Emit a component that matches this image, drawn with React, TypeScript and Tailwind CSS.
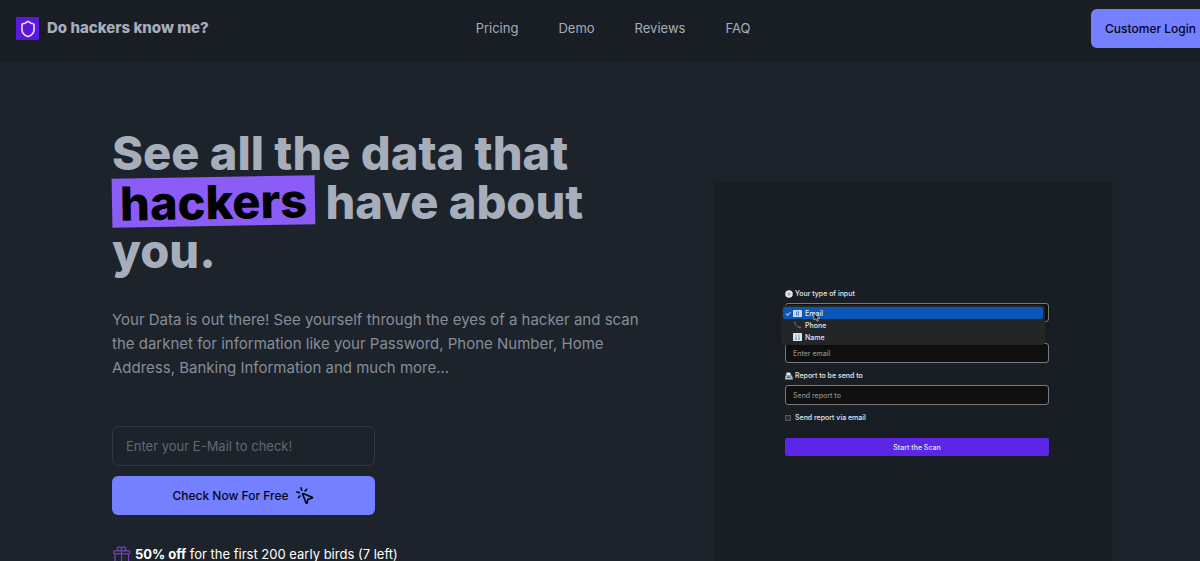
import { useState } from 'react';
import { MousePointerClick, Shield } from 'lucide-react';
import { HiOutlineGift } from 'react-icons/hi2';

const NAV_LINKS = ['Pricing', 'Demo', 'Reviews', 'FAQ'];

function GlobeIcon() {
  return (
    <svg viewBox="0 0 16 16" className="w-2 h-2">
      <circle cx="8" cy="8" r="7.5" fill="#e5e7eb" />
      <path d="M8 4v8M4 8h8" stroke="#8b9199" strokeWidth="1.5" fill="none" />
    </svg>
  );
}

function InboxIcon() {
  return (
    <svg viewBox="0 0 16 16" className="w-2 h-2">
      <path d="M3 1h7l3 6H2z" fill="#e5e7eb" />
      <path d="M1 7h13l2 8H0z" fill="#b6c2d1" />
      <path d="M4 9h7v3H4z" fill="#3f5f86" />
    </svg>
  );
}

function EmailIcon() {
  return (
    <svg viewBox="0 0 18 14" className="w-[9px] h-[7px]">
      <rect width="18" height="14" rx="1" fill="#c7d9f2" />
      <rect x="6" y="3" width="6" height="8" fill="#5d83bd" />
      <path d="M8 5h2v4H8z" fill="#e5e7eb" />
    </svg>
  );
}

function PhoneIcon() {
  return (
    <svg viewBox="0 0 18 16" className="w-[9px] h-2">
      <path d="M2 1c-2 4 6 13 13 14l2-3-4-2-2 1C8 10 6 7 5 5l1-2-2-2z" fill="#606367" />
    </svg>
  );
}

function NameIcon() {
  return (
    <svg viewBox="0 0 18 16" className="w-[9px] h-2">
      <rect width="18" height="16" rx="1" fill="#dbe7f0" />
      <path d="M5 3h2v4l1 7H4l1-7zM11 3h2v4l1 7h-4l1-7z" fill="#8fa9bd" />
    </svg>
  );
}

const OPTIONS = [
  { label: 'Email', icon: EmailIcon },
  { label: 'Phone', icon: PhoneIcon },
  { label: 'Name', icon: NameIcon },
];

function Header() {
  return (
    <header className="bg-[#191e24]">
      <div className="flex items-center h-[61px] pb-1 pl-4 -mr-2.5">
        <a href="#" className="flex items-center gap-2 flex-1 whitespace-nowrap font-extrabold text-[15px]">
          <span className="flex items-center justify-center w-[23px] h-[23px] bg-[#5b16e0] text-[#e9defc]">
            <Shield className="w-[18px] h-[18px]" strokeWidth={2.2} />
          </span>
          Do hackers know me?
        </a>
        <nav className="flex gap-10 text-[13px]">
          {NAV_LINKS.map((link) => (
            <a key={link} href="#" className="hover:text-white">
              {link}
            </a>
          ))}
        </nav>
        <div className="flex flex-1 justify-end">
          <button
            type="button"
            className="h-[39px] px-3.5 rounded-md bg-[#7480ff] text-[#050617] text-xs font-medium whitespace-nowrap"
          >
            Customer Login
          </button>
        </div>
      </div>
    </header>
  );
}

function ScanDemo() {
  const [selected, setSelected] = useState('Email');

  return (
    <div className="w-[399px] shrink-0 h-[400px] pl-[72px] pr-[63px] pt-[107px] bg-[#191e24] text-[7px] leading-[11px] text-gray-200 font-medium">
      <label htmlFor="type" className="flex items-center gap-0.5">
        <GlobeIcon />
        Your type of input
      </label>
      <div className="relative mt-1">
        <select
          id="type"
          value={selected}
          onChange={(e) => setSelected(e.target.value)}
          className="block w-full h-[19px] px-[7px] rounded-[3px] border border-[#77797c] bg-[#101010]"
        >
          {OPTIONS.map((o) => (
            <option key={o.label}>{o.label}</option>
          ))}
        </select>
        {/* Open option list */}
        <div className="absolute z-10 top-0.5 -left-1 right-1 p-0.5 rounded bg-[#242527] shadow-md">
          {OPTIONS.map(({ label, icon: Icon }) => (
            <button
              key={label}
              type="button"
              onClick={() => setSelected(label)}
              className={`flex items-center w-full h-3 rounded-xs ${label === selected ? 'bg-[#0b57b5]' : ''}`}
            >
              <span className="w-2.5">{label === selected && '✓'}</span>
              <Icon />
              <span className="ml-[3px]">{label}</span>
            </button>
          ))}
          <svg viewBox="0 0 10 14" className="absolute top-2 left-8 w-[7px] h-[9px]">
            <path d="M1 0v11l3-2 2 4 2-1-2-4h4z" fill="#111" stroke="#ddd" strokeWidth="1" />
          </svg>
        </div>
      </div>
      <input
        type="email"
        aria-label="Enter email"
        placeholder="Enter email"
        className="block w-full h-5 mt-[21px] px-[7px] rounded-[3px] border border-[#77797c] bg-[#101010] placeholder:text-[#8c8c8c]"
      />
      <label htmlFor="report" className="flex items-center gap-0.5 mt-[7px]">
        <InboxIcon />
        Report to be send to
      </label>
      <input
        id="report"
        type="text"
        placeholder="Send report to"
        className="block w-full h-5 mt-1 px-[7px] rounded-[3px] border border-[#77797c] bg-[#101010] placeholder:text-[#8c8c8c]"
      />
      <label className="flex items-center gap-1 mt-[7px]">
        <input type="checkbox" className="appearance-none w-1.5 h-1.5 border border-[#55585c] bg-[#2d2f32]" />
        Send report via email
      </label>
      <button type="button" className="block w-full h-[18px] mt-[15px] rounded-xs bg-[#5b26e8] text-center">
        Start the Scan
      </button>
    </div>
  );
}

export default function App() {
  const [email, setEmail] = useState('');

  return (
    <div className="h-screen overflow-hidden bg-[#1d232a] text-[#a6adbb] font-['Inter',sans-serif]">
      <Header />
      <main className="flex items-start justify-between pl-28 pr-[88px]">
        <section className="w-[530px] pt-[67px]">
          <h1 className="text-[47px] leading-[49px] font-extrabold">
            See all the data that{' '}
            <span className="inline-block -rotate-1 px-2 bg-[#8b5cf6] text-black">hackers</span> have about you.
          </h1>
          <p className="mt-[33px] text-[15px] leading-6 text-[#868d99]">
            Your Data is out there! See yourself through the eyes of a hacker and scan the darknet for information like
            your Password, Phone Number, Home Address, Banking Information and much more...
          </p>
          <form className="flex flex-col gap-2.5 w-[263px] mt-[46px]" onSubmit={(e) => e.preventDefault()}>
            <input
              type="email"
              aria-label="E-Mail"
              value={email}
              onChange={(e) => setEmail(e.target.value)}
              placeholder="Enter your E-Mail to check!"
              className="h-10 px-[13px] rounded-md border border-[#31373f] bg-[#1d232a] text-[13px] placeholder:text-[#626871]"
            />
            <button
              type="submit"
              className="flex items-center justify-center gap-1.5 h-[39px] rounded-md bg-[#7480ff] text-[#050617] text-xs font-medium"
            >
              Check Now For Free
              <MousePointerClick className="w-5 h-5" />
            </button>
          </form>
          <p className="flex items-center gap-1 mt-[29px] text-[13px] leading-5 text-white whitespace-nowrap">
            <HiOutlineGift className="w-[19px] h-[19px] text-[#6d45b8]" />
            <span>
              <b>50% off</b> for the first 200 early birds (7 left)
            </span>
          </p>
        </section>
        <div className="pt-[120px]">
          <ScanDemo />
        </div>
      </main>
    </div>
  );
}
